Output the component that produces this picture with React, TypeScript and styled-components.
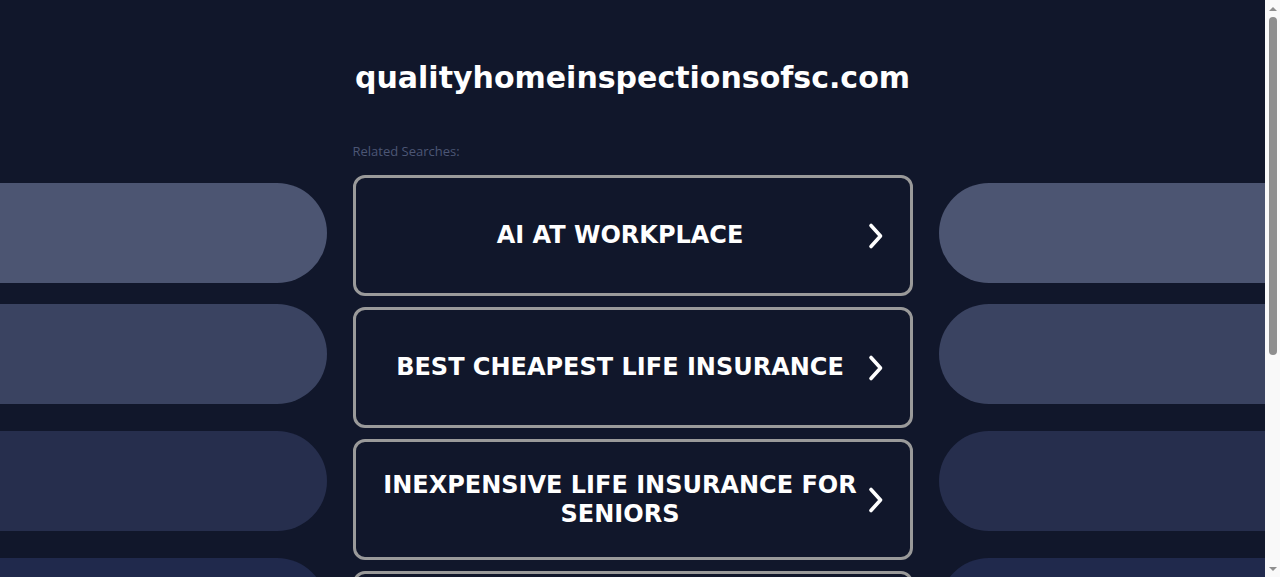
import React from "react";
import styled, { createGlobalStyle } from "styled-components";

const GlobalStyle = createGlobalStyle`
  html, body {
    margin: 0;
    padding: 0;
    height: 100%;
    overflow: hidden;
    background: #11172b;
  }
  * { box-sizing: border-box; }
`;

const Frame = styled.div`
  display: flex;
  height: 100vh;
`;

const Viewport = styled.div`
  flex: 1;
  min-width: 0;
  overflow: hidden;
  background: #11172b;
`;

/* Page scroll rail: arrows at both ends and the thumb */
const Rail = styled.div`
  width: 15px;
  flex-shrink: 0;
  display: flex;
  flex-direction: column;
  align-items: center;
  background: #f9f9f9;
`;

const RailArrow = styled.div<{ $down?: boolean }>`
  height: 17px;
  width: 15px;
  display: flex;
  align-items: center;
  justify-content: center;
  flex-shrink: 0;
  margin-top: ${(p) => (p.$down ? "auto" : "0")};
  &::before {
    content: "";
    width: 0;
    height: 0;
    border-left: 4px solid transparent;
    border-right: 4px solid transparent;
    ${(p) =>
      p.$down
        ? "border-top: 4px solid #8e8e8e;"
        : "border-bottom: 4px solid #8e8e8e;"}
  }
`;

const RailThumb = styled.div`
  width: 8px;
  height: 338px;
  border-radius: 4px;
  background: #8e8e8e;
  flex-shrink: 0;
`;

const Page = styled.div`
  display: grid;
  grid-template-columns: 1fr 560px 1fr;
  min-height: 927px;
  background: #11172b;
`;

const Side = styled.div<{ $right?: boolean }>`
  display: flex;
  flex-direction: column;
  align-items: ${(p) => (p.$right ? "flex-end" : "flex-start")};
  overflow: hidden;
`;

const Pill = styled.div<{ $color: string; $top: number; $right?: boolean }>`
  width: calc(100% - 26px);
  height: 100px;
  margin-top: ${(p) => p.$top}px;
  background: ${(p) => p.$color};
  border-radius: ${(p) => (p.$right ? "50px 0 0 50px" : "0 50px 50px 0")};
  flex-shrink: 0;
`;

const Center = styled.main`
  display: flex;
  flex-direction: column;
  padding-top: 60px;
  padding-bottom: 60px;
`;

const Title = styled.h1`
  margin: 0;
  text-align: center;
  font-family: "DejaVu Sans", sans-serif;
  font-weight: bold;
  font-size: 30px;
  line-height: 35px;
  color: #ffffff;
`;

const Label = styled.div`
  margin-top: 48px;
  font-family: "Open Sans", sans-serif;
  font-size: 13px;
  line-height: 17px;
  color: #4c5675;
`;

const List = styled.div`
  margin-top: 15px;
  display: flex;
  flex-direction: column;
  gap: 11px;
`;

const Link = styled.a`
  display: flex;
  align-items: center;
  min-height: 121px;
  padding: 0 25px;
  border: 3px solid #9a9a9a;
  border-radius: 12px;
  background: #11172b;
  text-decoration: none;
  color: #ffffff;
  cursor: pointer;
`;

const LinkText = styled.span`
  flex: 1;
  margin-right: 7px;
  text-align: center;
  font-family: "DejaVu Sans", sans-serif;
  font-weight: bold;
  font-size: 24px;
  line-height: 29px;
  text-transform: uppercase;
`;

const Chevron = () => (
  <svg width="18" height="28" viewBox="0 0 18 28" fill="none">
    <path
      d="M4 3.5 L13.5 14 L4 24.5"
      stroke="#ffffff"
      strokeWidth="3.6"
      strokeLinecap="round"
      strokeLinejoin="round"
    />
  </svg>
);

const searches = [
  "AI at Workplace",
  "Best Cheapest Life Insurance",
  "Inexpensive Life Insurance for Seniors",
  "Home Inspection Services",
  "Home Warranty Plans",
];

const pills = [
  { color: "#4c5572", top: 183 },
  { color: "#3a4361", top: 21 },
  { color: "#262e4d", top: 27 },
  { color: "#20294c", top: 27 },
  { color: "#1b2446", top: 27 },
];

export default function App() {
  return (
    <>
      <GlobalStyle />
      <Frame>
        <Viewport>
          <Page>
            <Side>
              {pills.map((p, i) => (
                <Pill key={i} $color={p.color} $top={p.top} />
              ))}
            </Side>
            <Center>
              <Title>qualityhomeinspectionsofsc.com</Title>
              <Label>Related Searches:</Label>
              <List>
                {searches.map((s) => (
                  <Link key={s}>
                    <LinkText>{s}</LinkText>
                    <Chevron />
                  </Link>
                ))}
              </List>
            </Center>
            <Side $right>
              {pills.map((p, i) => (
                <Pill key={i} $color={p.color} $top={p.top} $right />
              ))}
            </Side>
          </Page>
        </Viewport>
        <Rail>
          <RailArrow />
          <RailThumb />
          <RailArrow $down />
        </Rail>
      </Frame>
    </>
  );
}
